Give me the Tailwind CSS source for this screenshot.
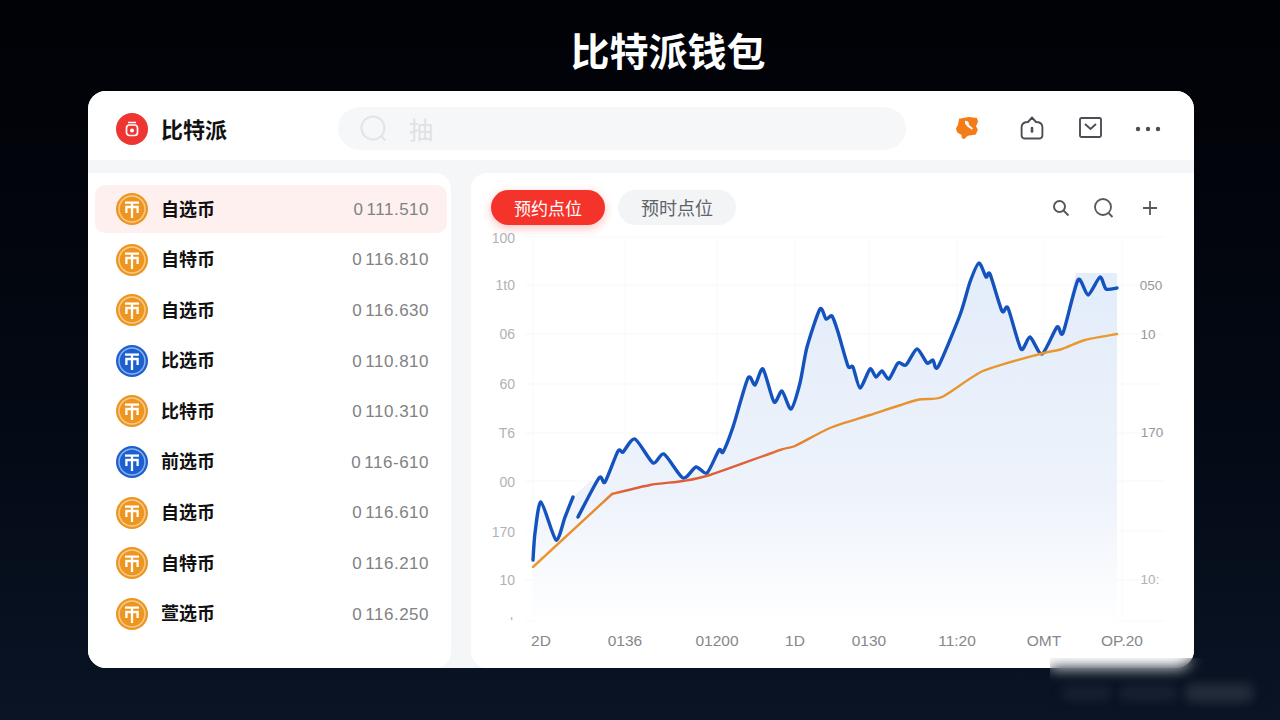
<!DOCTYPE html>
<html lang="zh-CN">
<head>
    <meta charset="UTF-8">
    <meta name="viewport" content="width=device-width, initial-scale=1.0">
    <title>比特派钱包</title>
    <script src="https://cdn.jsdelivr.net/npm/@tailwindcss/browser@4"></script>
</head>
<body class="relative w-[1280px] h-[720px] overflow-hidden bg-gradient-to-b from-[#010206] via-[#030812] to-[#0a1425] font-['Noto_Sans_CJK_SC','Noto_Sans',sans-serif]">

    <!-- 图标定义 -->
    <svg class="hidden">
        <symbol id="coin" viewBox="0 0 32 32">
            <circle cx="16" cy="16" r="16" fill="currentColor"/>
            <circle cx="16" cy="16" r="13" fill="none" stroke="#fff" stroke-opacity=".5" stroke-width="1.500"/>
            <g fill="none" stroke="#fff" stroke-width="2.300">
                <path d="M9 9.600h14"/>
                <path d="M10.400 20v-6h11.200V20"/>
                <path d="M16 9.600V25"/>
            </g>
        </symbol>
    </svg>

    <div class="h-[91px] flex items-center justify-center pl-[56px] pt-[8px]">
        <h1 class="text-[39px] leading-none font-bold text-white">比特派钱包</h1>
    </div>

    <div class="ml-[88px] w-[1106px] h-[577px] rounded-[18px] overflow-hidden bg-[#f5f6f8] flex flex-col">
        <!-- 顶栏 -->
        <header class="h-[69px] shrink-0 bg-white flex items-center pl-[28px] pt-[7px]">
            <div class="w-[32px] h-[32px] rounded-full bg-[#ee3532] flex items-center justify-center">
                <svg class="w-[14px] h-[16px]" viewBox="0 0 14 16" fill="none" stroke="#fff" stroke-width="1.700">
                    <path d="M3 1.500h8"/>
                    <rect x="1.500" y="4" width="11" height="10.500" rx="3"/>
                    <circle cx="7" cy="9.400" r="2" fill="#fff" stroke="none"/>
                </svg>
            </div>
            <span class="ml-[13px] mb-[3px] w-[177px] text-[22px] leading-none font-bold text-[#111]">比特派</span>
            <div class="w-[568px] h-[43px] -mt-[1px] rounded-full bg-[#f6f7f9] flex items-center pl-[22px]">
                <svg class="w-[28px] h-[28px]" viewBox="0 0 28 28" fill="none" stroke="#e1e4e8" stroke-width="2">
                    <circle cx="13" cy="13" r="11.500"/>
                    <path d="M21.500 21.500l4 4"/>
                </svg>
                <span class="ml-[21px] text-[24px] leading-none text-[#dfe1e4]">抽</span>
            </div>
            <div class="flex items-center">
                <svg class="ml-[49px] w-[24px] h-[24px] -mt-[2px]" viewBox="0 0 24 22" preserveAspectRatio="none">
                    <path fill="#f47b16" d="M4 2.500l10-1.500 8 .8 1 3.500-2 4 1.800 3.200-2 4.500-8 1-3.500 3-2.500-.6-.3-3L2 15l-1-3.800L3 8z"/>
                    <path fill="#fff" d="M10 4.400l3.200.6 1 3.200 3.600 3-.8 1.400-4.400-2.800-2.600-2.600z"/>
                </svg>
                <svg class="ml-[41px] w-[24px] h-[24px] -mt-[3px]" viewBox="0 0 24 24" fill="none" stroke="#4b4f55" stroke-width="1.900" stroke-linejoin="round">
                    <path d="M12 1.500L8 6Q2 6 1.600 11V19q0 3.500 3.500 3.500h13.800q3.500 0 3.500-3.500V11Q22 6 16 6z"/>
                    <path d="M12 12v3.500" stroke-width="2.600" stroke-linecap="round"/>
                </svg>
                <svg class="ml-[35px] w-[23px] h-[21px] -mt-[3px]" viewBox="0 0 23 21" fill="none" stroke="#4b4f55" stroke-width="1.900">
                    <rect x="1" y="1" width="21" height="19" rx="1.500"/>
                    <path d="M6 7l5.500 5L17 7"/>
                </svg>
                <svg class="ml-[33px] w-[26px] h-[6px]" viewBox="0 0 26 6" fill="#4b4f55">
                    <circle cx="3" cy="3" r="2.200"/><circle cx="13" cy="3" r="2.200"/><circle cx="23" cy="3" r="2.200"/>
                </svg>
            </div>
        </header>

        <div class="flex-1 mt-[13px] flex gap-[20px]">
            <!-- 币种列表 -->
            <aside class="w-[363px] bg-white rounded-r-[16px] pt-[12px] pl-[7px] pr-[4px] flex flex-col gap-[2.600px]">
                <div class="h-[48px] rounded-[10px] bg-[#fef0ee] flex items-center pl-[21px] pr-[18px]">
                    <svg class="w-[32px] h-[32px] text-[#ee951f]"><use href="#coin"/></svg>
                    <span class="ml-[13px] mb-[2px] text-[18px] font-semibold text-[#111]">自选币</span>
                    <span class="ml-auto mt-[1px] text-[17px] font-['Liberation_Sans'] tracking-[.5px] [word-spacing:-2px] text-[#808285]">0 111.510</span>
                </div>
                <div class="h-[48px] flex items-center pl-[21px] pr-[18px]">
                    <svg class="w-[32px] h-[32px] text-[#ee951f]"><use href="#coin"/></svg>
                    <span class="ml-[13px] mb-[2px] text-[18px] font-semibold text-[#111]">自特币</span>
                    <span class="ml-auto mt-[1px] text-[17px] font-['Liberation_Sans'] tracking-[.5px] [word-spacing:-2px] text-[#808285]">0 116.810</span>
                </div>
                <div class="h-[48px] flex items-center pl-[21px] pr-[18px]">
                    <svg class="w-[32px] h-[32px] text-[#ee951f]"><use href="#coin"/></svg>
                    <span class="ml-[13px] mb-[2px] text-[18px] font-semibold text-[#111]">自选币</span>
                    <span class="ml-auto mt-[1px] text-[17px] font-['Liberation_Sans'] tracking-[.5px] [word-spacing:-2px] text-[#808285]">0 116.630</span>
                </div>
                <div class="h-[48px] flex items-center pl-[21px] pr-[18px]">
                    <svg class="w-[32px] h-[32px] text-[#1c5fd0]"><use href="#coin"/></svg>
                    <span class="ml-[13px] mb-[2px] text-[18px] font-semibold text-[#111]">比选币</span>
                    <span class="ml-auto mt-[1px] text-[17px] font-['Liberation_Sans'] tracking-[.5px] [word-spacing:-2px] text-[#808285]">0 110.810</span>
                </div>
                <div class="h-[48px] flex items-center pl-[21px] pr-[18px]">
                    <svg class="w-[32px] h-[32px] text-[#ee951f]"><use href="#coin"/></svg>
                    <span class="ml-[13px] mb-[2px] text-[18px] font-semibold text-[#111]">比特币</span>
                    <span class="ml-auto mt-[1px] text-[17px] font-['Liberation_Sans'] tracking-[.5px] [word-spacing:-2px] text-[#808285]">0 110.310</span>
                </div>
                <div class="h-[48px] flex items-center pl-[21px] pr-[18px]">
                    <svg class="w-[32px] h-[32px] text-[#1c5fd0]"><use href="#coin"/></svg>
                    <span class="ml-[13px] mb-[2px] text-[18px] font-semibold text-[#111]">前选币</span>
                    <span class="ml-auto mt-[1px] text-[17px] font-['Liberation_Sans'] tracking-[.5px] [word-spacing:-2px] text-[#808285]">0 116-610</span>
                </div>
                <div class="h-[48px] flex items-center pl-[21px] pr-[18px]">
                    <svg class="w-[32px] h-[32px] text-[#ee951f]"><use href="#coin"/></svg>
                    <span class="ml-[13px] mb-[2px] text-[18px] font-semibold text-[#111]">自选币</span>
                    <span class="ml-auto mt-[1px] text-[17px] font-['Liberation_Sans'] tracking-[.5px] [word-spacing:-2px] text-[#808285]">0 116.610</span>
                </div>
                <div class="h-[48px] flex items-center pl-[21px] pr-[18px]">
                    <svg class="w-[32px] h-[32px] text-[#ee951f]"><use href="#coin"/></svg>
                    <span class="ml-[13px] mb-[2px] text-[18px] font-semibold text-[#111]">自特币</span>
                    <span class="ml-auto mt-[1px] text-[17px] font-['Liberation_Sans'] tracking-[.5px] [word-spacing:-2px] text-[#808285]">0 116.210</span>
                </div>
                <div class="h-[48px] flex items-center pl-[21px] pr-[18px]">
                    <svg class="w-[32px] h-[32px] text-[#ee951f]"><use href="#coin"/></svg>
                    <span class="ml-[13px] mb-[2px] text-[18px] font-semibold text-[#111]">萱选币</span>
                    <span class="ml-auto mt-[1px] text-[17px] font-['Liberation_Sans'] tracking-[.5px] [word-spacing:-2px] text-[#808285]">0 116.250</span>
                </div>
            </aside>

            <!-- 行情图 -->
            <main class="flex-1 bg-white rounded-l-[16px] pt-[17px] flex flex-col">
                <div class="h-[35px] pl-[20px] pr-[36px] flex items-center">
                    <div class="w-[114px] h-[35px] rounded-full bg-[#f4332b] shadow-[0_3px_10px_rgba(244,51,43,0.3)] flex items-center justify-center text-[17px] text-white">预约点位</div>
                    <div class="ml-[13px] w-[118px] h-[35px] rounded-full bg-[#f3f4f6] flex items-center justify-center text-[18px] text-[#5f6368]">预时点位</div>
                    <svg class="ml-auto w-[18px] h-[18px]" viewBox="0 0 18 18" fill="none" stroke="#55595f" stroke-width="2">
                        <circle cx="7.500" cy="7.500" r="5.500"/><path d="M11.500 11.500l5 5"/>
                    </svg>
                    <svg class="ml-[23px] w-[22px] h-[22px]" viewBox="0 0 22 22" fill="none" stroke="#55595f" stroke-width="1.800">
                        <circle cx="10" cy="10" r="8"/><path d="M15.500 16l4 4"/>
                    </svg>
                    <svg class="ml-[27px] w-[16px] h-[16px]" viewBox="0 0 16 16" fill="none" stroke="#55595f" stroke-width="1.800">
                        <path d="M8 1v14M1 8h14"/>
                    </svg>
                </div>
                <svg class="mt-[5px] block w-[723px] h-[438px]" viewBox="471 230 723 438">
                    <defs>
                        <linearGradient id="area" x1="0" y1="300" x2="0" y2="625" gradientUnits="userSpaceOnUse">
                            <stop offset="0" stop-color="#e4edfa"/>
                            <stop offset=".6" stop-color="#eef3fb"/>
                            <stop offset="1" stop-color="#ffffff"/>
                        </linearGradient>
                        <linearGradient id="trend" x1="533" y1="0" x2="1117" y2="0" gradientUnits="userSpaceOnUse">
                            <stop offset="0" stop-color="#eb9a2e"/>
                            <stop offset=".12" stop-color="#e58a30"/>
                            <stop offset=".16" stop-color="#dd5f38"/>
                            <stop offset=".36" stop-color="#dd5f38"/>
                            <stop offset=".5" stop-color="#e6902f"/>
                            <stop offset="1" stop-color="#eb9a2e"/>
                        </linearGradient>
                    </defs>

                    <!-- 网格 -->
                    <g stroke="#f6f7f8" stroke-width="1" fill="none">
                        <path d="M525 237H1164M525 285H1164M525 334H1164M525 384H1164M525 433H1164M525 481H1164M525 531H1164M525 580H1164M525 621H1164"/>
                        <path d="M533 237V621M625 237V621M717 237V621M795 237V621M869 237V621M957 237V621M1044 237V621M1122 237V621" stroke="#f9fafb"/>
                    </g>

                    <!-- 面积 -->
                    <path fill="url(#area)" d="M533 560L535 533L541 502L556 540L573 497L590 481L605 482L618 451L623 452L635 439L653 463L664 454L683 478L696 467L707 473L719 450L723 452L733 427L748 378L755 385L763 369L774 402L782 391L791 409L800 383L807 347L820 309L826 319L832 316L838 332L848 366L853 367L860 388L870 369L876 377L882 371L889 379L898 363L906 365L917 349L927 363L933 360L938 367L960 315L970 282L979 263L986 277L990 274L1002 311L1008 308L1021 349L1030 337L1042 354L1057 327L1063 333L1072 290L1076 273L1117 273V622H533Z"/>

                    <!-- 价格线 -->
                    <g fill="none" stroke="#1453bd" stroke-width="3.400" stroke-linecap="round" stroke-linejoin="round">
                        <path data-points="533 560 535 533 541 502 556 540 565 517 573 497"/>
                        <path data-points="578 517 599 478 605 482 618 451 623 452 635 439 653 463 664 454 683 478 696 467 707 473 719 450 723 452 733 427 748 378 755 385 763 369 774 402 782 391 791 409 800 383 807 347 820 309 826 319 832 316 838 332 848 366 853 367 860 388 870 369 876 377 882 371 889 379 898 363 906 365 917 349 927 363 933 360 938 367 960 315 970 282 979 263 986 277 990 274 1002 311 1008 308 1021 349 1030 337 1042 354 1057 327 1063 333 1078 280 1088 295 1100 277 1106 289 1117 288"/>
                    </g>

                    <!-- 均线 -->
                    <g fill="none" stroke="url(#trend)" stroke-width="2.400" stroke-linejoin="round" stroke-linecap="round">
                        <path d="M533 567L612 494"/>
                        <path data-points="612 494 650 485 683 481 710 475 780 450 795 446 830 428 870 415 917 400 942 397 983 371 1040 354 1062 349 1085 340 1117 334"/>
                    </g>

                    <!-- 纵轴 -->
                    <g font-family="Liberation Sans" font-size="14" fill="#b0b2b5" text-anchor="end">
                        <text x="515" y="243">100</text>
                        <text x="515" y="290">1t0</text>
                        <text x="515" y="339">06</text>
                        <text x="515" y="389">60</text>
                        <text x="515" y="438">T6</text>
                        <text x="515" y="487">00</text>
                        <text x="515" y="537">170</text>
                        <text x="515" y="585">10</text>
                        <text x="513" y="627">'</text>
                    </g>
                    <g font-family="Liberation Sans" font-size="13.500" fill="#96989c" text-anchor="middle">
                        <text x="1151" y="290">050</text>
                        <text x="1148" y="339">10</text>
                        <text x="1152" y="437">170</text>
                        <text x="1150" y="584" fill="#b0b2b5">10:</text>
                    </g>

                    <!-- 横轴 -->
                    <g font-family="Liberation Sans" font-size="15.500" fill="#85888c" text-anchor="middle">
                        <text x="541" y="646">2D</text>
                        <text x="625" y="646">0136</text>
                        <text x="717" y="646">01200</text>
                        <text x="795" y="646">1D</text>
                        <text x="869" y="646">0130</text>
                        <text x="957" y="646">11:20</text>
                        <text x="1044" y="646">OMT</text>
                        <text x="1122" y="646">OP.20</text>
                    </g>
                </svg>
            </main>
        </div>
    </div>

    <!-- 右下角模糊水印 -->
    <div class="absolute left-[1050px] top-[658px] w-[222px] h-[52px] backdrop-blur-[7px] flex items-center gap-[6px] pl-[12px] pt-[18px]">
        <div class="w-[50px] h-[16px] rounded-full bg-white/5 blur-[5px]"></div>
        <div class="w-[60px] h-[18px] rounded-full bg-white/5 blur-[5px]"></div>
        <div class="w-[70px] h-[20px] rounded-full bg-white/10 blur-[5px]"></div>
    </div>

    <script>
        // 把折线点转成平滑曲线
        document.querySelectorAll('[data-points]').forEach((line) => {
            const n = line.dataset.points.split(' ').map(Number);
            const pts = [];
            for (let i = 0; i < n.length; i += 2) pts.push([n[i], n[i + 1]]);

            let d = `M${pts[0][0]} ${pts[0][1]}`;
            for (let i = 0; i < pts.length - 1; i++) {
                const p0 = pts[i - 1] || pts[i];
                const p1 = pts[i];
                const p2 = pts[i + 1];
                const p3 = pts[i + 2] || p2;
                const k = 0.12;
                d += `C${p1[0] + (p2[0] - p0[0]) * k} ${p1[1] + (p2[1] - p0[1]) * k} ${p2[0] - (p3[0] - p1[0]) * k} ${p2[1] - (p3[1] - p1[1]) * k} ${p2[0]} ${p2[1]}`;
            }
            line.setAttribute('d', d);
        });
    </script>
</body>
</html>
